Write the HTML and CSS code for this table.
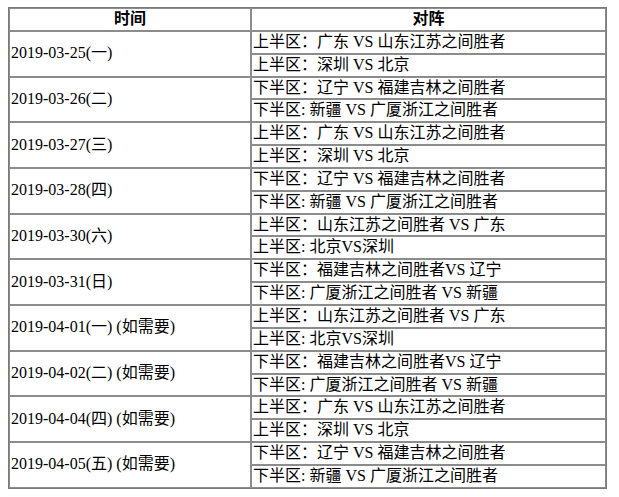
FILE: index.html
```html
<!DOCTYPE html>
<html lang="zh-CN">
<head>
<meta charset="utf-8">
<title>赛程</title>
<link rel="stylesheet" href="styles.css">
</head>
<body>
<table class="schedule">
  <thead>
    <tr><th class="col-time">时间</th><th class="col-match">对阵</th></tr>
  </thead>
  <tbody>
    <tr><td class="date" rowspan="2">2019-03-25(一)</td><td class="match">上半区：广东 VS 山东江苏之间胜者</td></tr>
    <tr><td class="match">上半区：深圳 VS 北京</td></tr>
    <tr><td class="date" rowspan="2">2019-03-26(二)</td><td class="match">下半区：辽宁 VS 福建吉林之间胜者</td></tr>
    <tr><td class="match">下半区: 新疆 VS 广厦浙江之间胜者</td></tr>
    <tr><td class="date" rowspan="2">2019-03-27(三)</td><td class="match">上半区：广东 VS 山东江苏之间胜者</td></tr>
    <tr><td class="match">上半区：深圳 VS 北京</td></tr>
    <tr><td class="date" rowspan="2">2019-03-28(四)</td><td class="match">下半区：辽宁 VS 福建吉林之间胜者</td></tr>
    <tr><td class="match">下半区: 新疆 VS 广厦浙江之间胜者</td></tr>
    <tr><td class="date" rowspan="2">2019-03-30(六)</td><td class="match">上半区：山东江苏之间胜者 VS 广东</td></tr>
    <tr><td class="match">上半区: 北京VS深圳</td></tr>
    <tr><td class="date" rowspan="2">2019-03-31(日)</td><td class="match">下半区：福建吉林之间胜者VS 辽宁</td></tr>
    <tr><td class="match">下半区: 广厦浙江之间胜者 VS 新疆</td></tr>
    <tr><td class="date" rowspan="2">2019-04-01(一) (如需要)</td><td class="match">上半区：山东江苏之间胜者 VS 广东</td></tr>
    <tr><td class="match">上半区: 北京VS深圳</td></tr>
    <tr><td class="date" rowspan="2">2019-04-02(二) (如需要)</td><td class="match">下半区：福建吉林之间胜者VS 辽宁</td></tr>
    <tr><td class="match">下半区: 广厦浙江之间胜者 VS 新疆</td></tr>
    <tr><td class="date" rowspan="2">2019-04-04(四) (如需要)</td><td class="match">上半区：广东 VS 山东江苏之间胜者</td></tr>
    <tr><td class="match">上半区：深圳 VS 北京</td></tr>
    <tr><td class="date" rowspan="2">2019-04-05(五) (如需要)</td><td class="match">下半区：辽宁 VS 福建吉林之间胜者</td></tr>
    <tr><td class="match">下半区: 新疆 VS 广厦浙江之间胜者</td></tr>
  </tbody>
</table>
</body>
</html>
```

FILE: styles.css
```css
html, body {
  background: #ffffff;
}
body {
  margin: 7px 8px;
  font-family: "Liberation Serif", "Noto Sans CJK SC", serif;
  font-size: 16px;
  color: #000000;
}
.schedule {
  border-collapse: separate;
  border-spacing: 0;
  border: 1px solid #7a7a7a;
  table-layout: fixed;
  width: 599px;
}
.schedule th,
.schedule td {
  border: 1px solid #8c8c8c;
  padding: 0 1px;
  height: 20.85px;
  line-height: 20.85px;
  white-space: nowrap;
  overflow: hidden;
}
.schedule th {
  font-weight: bold;
  text-align: center;
}
.col-time {
  width: 238px;
}
.date {
  text-align: left;
  vertical-align: middle;
}
.match {
  text-align: left;
}
```
